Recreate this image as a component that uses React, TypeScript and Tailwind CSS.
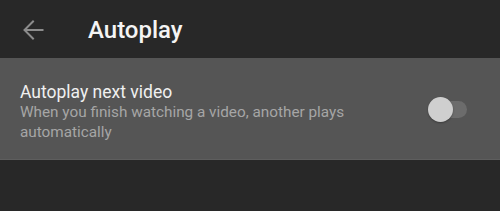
import React from "react";

export default function App() {
  return (
    <div className="w-[500px] h-[211px] bg-[#282828] overflow-hidden" style={{ fontFamily: "Roboto, 'Liberation Sans', sans-serif" }}>
      <div className="h-[58px] flex items-center">
        <div className="w-[88px] flex items-center pl-[21px] pt-[2px]">
          <svg width="24" height="24" viewBox="0 0 24 24" fill="none" stroke="#8c8c8c" strokeWidth="2" strokeLinecap="square">
            <path d="M21.5 12H4M12 3.5 3.5 12l8.5 8.5" />
          </svg>
        </div>
        <div className="text-[24px] font-medium text-[#f4f4f4] leading-[24px] pt-[2px]">Autoplay</div>
      </div>
      <div className="h-[102px] bg-[#555555] border-b border-[#5e5e5e] flex items-start pt-[24px] pl-[20px] pr-[32px]">
        <div className="flex-1">
          <div className="text-[17.5px] text-[#f0f0f0] leading-[20px]">Autoplay next video</div>
          <div className="text-[15.3px] text-[#a6a6a6] leading-[20px] w-[340px]">When you finish watching a video, another plays automatically</div>
        </div>
        <div className="relative w-[40px] h-[25px] flex items-center mt-[15px]">
          <div className="absolute left-[4px] w-[35px] h-[17px] rounded-full bg-[#6c6c6c]" />
          <div className="absolute left-0 w-[25px] h-[25px] rounded-full bg-[#cfcfcf] shadow-[0_1px_2px_rgba(0,0,0,0.3)]" />
        </div>
      </div>
    </div>
  );
}
